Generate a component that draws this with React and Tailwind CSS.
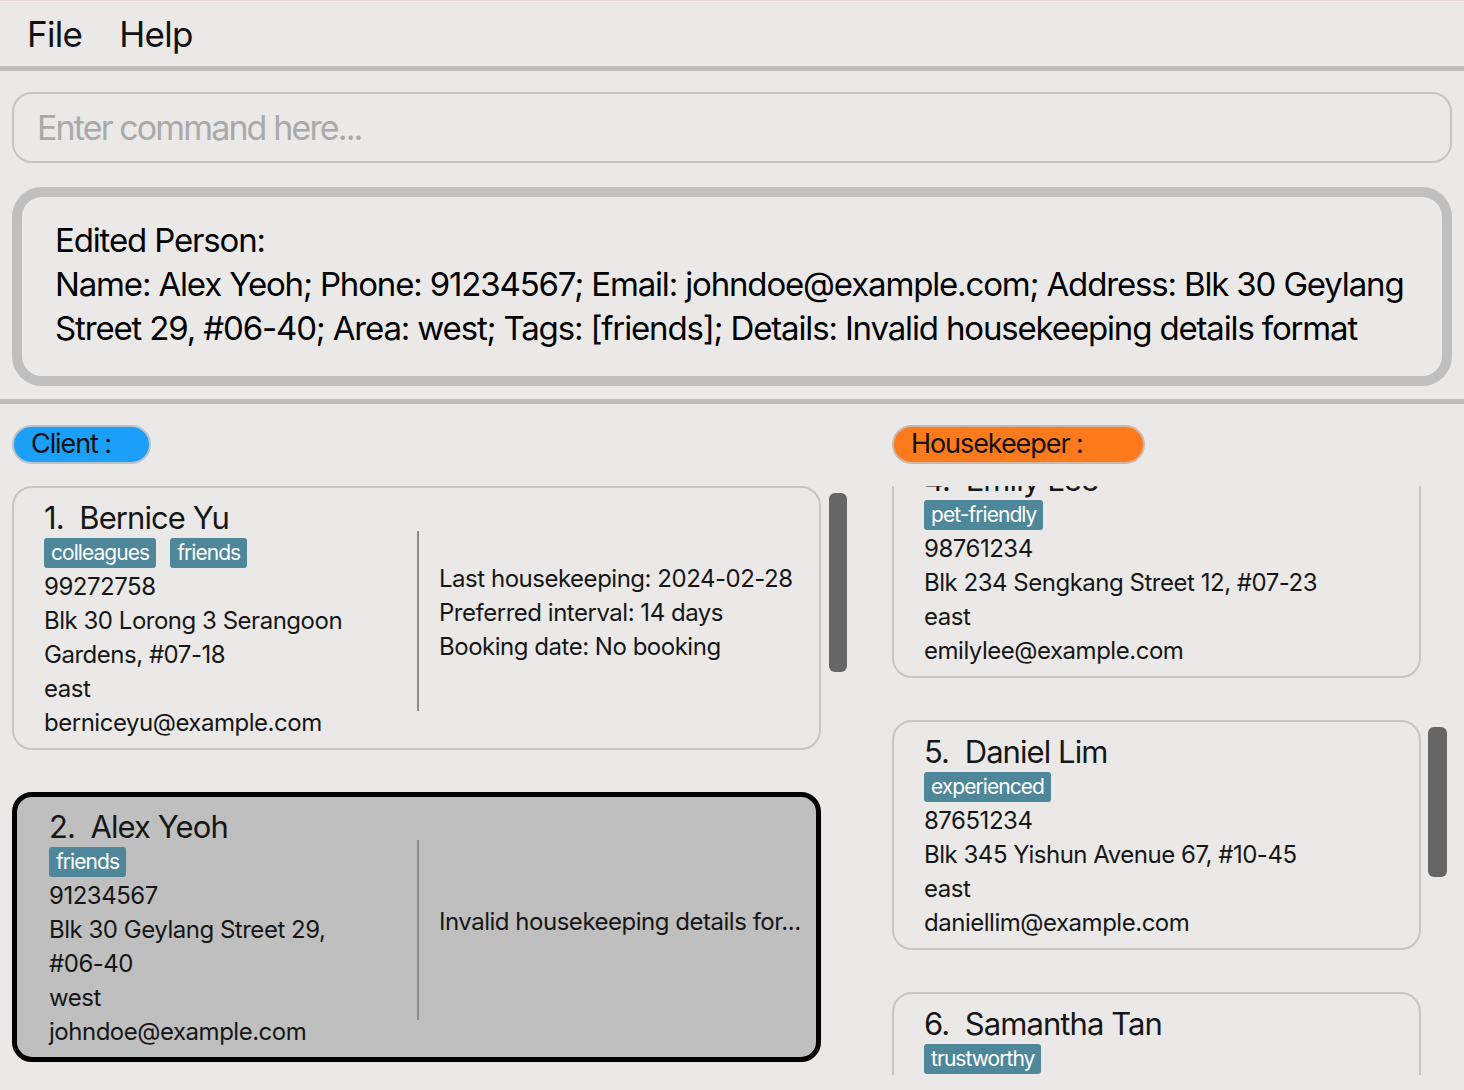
import React from "react";

const FONT = { fontFamily: "Inter, 'Noto Sans', sans-serif" };

const clients = [
  {
    idx: 1,
    name: "Bernice Yu",
    tags: ["colleagues", "friends"],
    phone: "99272758",
    address: "Blk 30 Lorong 3 Serangoon Gardens, #07-18",
    area: "east",
    email: "berniceyu@example.com",
    details: ["Last housekeeping: 2024-02-28", "Preferred interval: 14 days", "Booking date: No booking"],
  },
  {
    idx: 2,
    name: "Alex Yeoh",
    tags: ["friends"],
    phone: "91234567",
    address: "Blk 30 Geylang Street 29, #06-40",
    area: "west",
    email: "johndoe@example.com",
    details: ["Invalid housekeeping details for..."],
    selected: true,
  },
];

const housekeepers = [
  {
    idx: 4,
    name: "Emily Lee",
    tags: ["pet-friendly"],
    phone: "98761234",
    address: "Blk 234 Sengkang Street 12, #07-23",
    area: "east",
    email: "emilylee@example.com",
  },
  {
    idx: 5,
    name: "Daniel Lim",
    tags: ["experienced"],
    phone: "87651234",
    address: "Blk 345 Yishun Avenue 67, #10-45",
    area: "east",
    email: "daniellim@example.com",
  },
  {
    idx: 6,
    name: "Samantha Tan",
    tags: ["trustworthy"],
    phone: "81234567",
    address: "Blk 456 Punggol Drive 8, #03-12",
    area: "north",
    email: "samanthatan@example.com",
  },
];

function PersonInfo({ p, wrap }) {
  return (
    <div className={wrap}>
      <div className="text-[31px] leading-[34px] whitespace-pre tracking-[-0.03em] text-[#161616]">
        {p.idx}.  {p.name}
      </div>
      <div className="flex gap-[14px] mt-[3px]">
        {p.tags.map((t) => (
          <span key={t} className="bg-[#4e879a] text-white text-[21px] leading-[30px] px-[7px] rounded-[3px] tracking-[-0.045em]">
            {t}
          </span>
        ))}
      </div>
      <div className="mt-[2px] text-[24px] leading-[34px] tracking-[-0.02em] text-[#161616]">
        <div>{p.phone}</div>
        <div>{p.address}</div>
        <div>{p.area}</div>
        <div>{p.email}</div>
      </div>
    </div>
  );
}

function ClientCard({ p }) {
  return (
    <div
      className={
        p.selected
          ? "flex rounded-[20px] border-[5px] border-black bg-[#bfbfbf] pt-[13px] pb-[8px]"
          : "flex rounded-[20px] border-2 border-[#c6c6c6] pt-[13px] pb-[8px]"
      }
    >
      <PersonInfo
        p={p}
        wrap={p.selected ? "w-[400px] pl-[32px] pr-[40px]" : "w-[403px] pl-[30px] pr-[40px]"}
      />
      <div className="flex items-center">
        <div className="w-[2px] h-[180px] bg-[#8c8c8c]" />
      </div>
      <div className="flex flex-col justify-center pl-[20px] pb-[16px] text-[24px] leading-[34px] tracking-[-0.02em] text-[#161616]">
        {p.details.map((d) => (
          <div key={d} className="whitespace-nowrap">{d}</div>
        ))}
      </div>
    </div>
  );
}

function KeeperCard({ p }) {
  return (
    <div className="rounded-[20px] border-2 border-[#c6c6c6] pl-[30px] pt-[13px] pb-[8px]">
      <PersonInfo p={p} wrap="" />
    </div>
  );
}

export default function App() {
  return (
    <div style={FONT} className="w-[1464px] h-[1090px] bg-[#ebe9e7] overflow-hidden text-[#161616]">
      {/* Menu bar */}
      <div className="h-[2px] border-t border-[#e6d9d9] bg-[#f0eeec]" />
      <div className="h-[64px] flex items-center gap-[37px] pl-[27px] text-[35px] tracking-[-0.02em] text-[#111]">
        <span>File</span>
        <span>Help</span>
      </div>
      <div className="h-[5px] bg-[#bdbdbd]" />

      {/* Command box */}
      <div className="px-[12px] pt-[21px]">
        <div className="h-[71px] rounded-[20px] border-2 border-[#c3c3c3] flex items-center pl-[23px] text-[34px] tracking-[-0.055em] text-[#a9a9a9]">
          Enter command here...
        </div>
      </div>

      {/* Result display */}
      <div className="px-[12px] pt-[24px]">
        <div className="h-[199px] rounded-[30px] border-[10px] border-[#bfbfbf] pl-[33px] pt-[21px] text-[33px] leading-[44px] tracking-[-0.035em] text-black whitespace-nowrap">
          Edited Person:
          <br />
          Name: Alex Yeoh; Phone: 91234567; Email: johndoe@example.com; Address: Blk 30 Geylang
          <br />
          Street 29, #06-40; Area: west; Tags: [friends]; Details: Invalid housekeeping details format
        </div>
      </div>

      <div className="h-[5px] bg-[#bdbdbd] mt-[13px]" />

      {/* Lists */}
      <div className="flex pl-[12px] pt-[21px]">
        <div className="w-[868px]">
          <div className="w-[139px] h-[39px] rounded-full bg-[#1c9ff9] border-2 border-[#b9c2c9] flex items-center pl-[17px] text-[27px] tracking-[-0.04em] text-[#111]">
            Client :
          </div>
          <div className="flex mt-[22px]">
            <div className="w-[809px] flex flex-col gap-[42px]">
              {clients.map((p) => (
                <ClientCard key={p.idx} p={p} />
              ))}
            </div>
            <div className="ml-[8px] mt-[7px] w-[18px] h-[179px] rounded-[6px] bg-[#666666]" />
          </div>
        </div>

        <div className="flex-1 pl-[12px]">
          <div className="w-[253px] h-[39px] rounded-full bg-[#fd7a1c] border-2 border-[#cdb8a8] flex items-center pl-[17px] text-[27px] tracking-[-0.04em] text-[#111]">
            Housekeeper :
          </div>
          <div className="flex mt-[22px]">
            <div className="w-[529px] h-[589px] overflow-hidden">
              <div className="-mt-[38px] flex flex-col gap-[42px]">
                {housekeepers.map((p) => (
                  <KeeperCard key={p.idx} p={p} />
                ))}
              </div>
            </div>
            <div className="ml-[7px] mt-[241px] w-[19px] h-[150px] rounded-[6px] bg-[#666666]" />
          </div>
        </div>
      </div>
    </div>
  );
}
